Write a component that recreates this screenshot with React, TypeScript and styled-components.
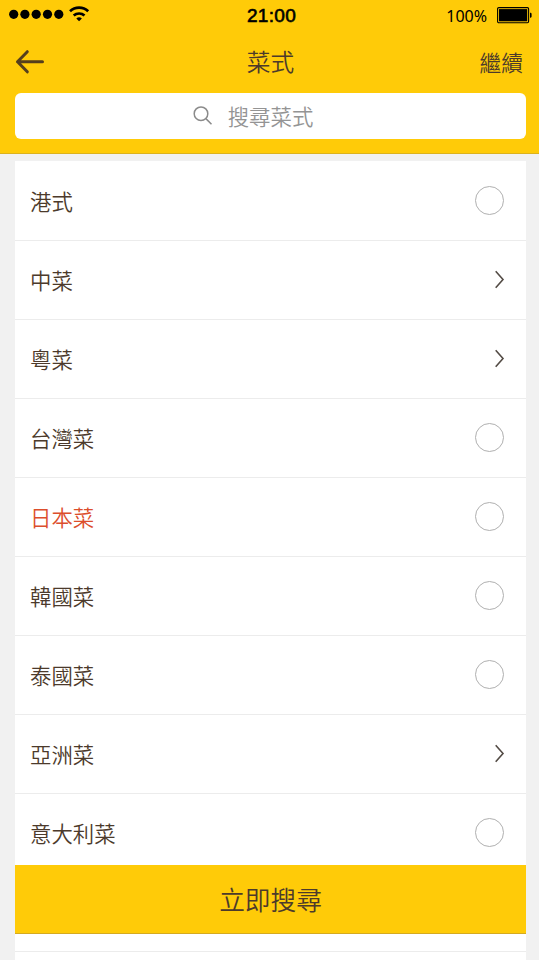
import React from "react";
import styled, { createGlobalStyle } from "styled-components";

const cjk = '"Noto Sans CJK TC", "Noto Sans", sans-serif';

const GlobalStyle = createGlobalStyle`
  *, *::before, *::after { box-sizing: border-box; }
  body { margin: 0; background: #f1f1f1; }
  button { border: 0; padding: 0; background: none; font: inherit; color: inherit; }
`;

const Screen = styled.main`
  position: relative;
  width: 539px;
  height: 960px;
  overflow: hidden;
  background: #f1f1f1;
  color: #4c3a2b;
  font-family: ${cjk};
  font-weight: 350;
`;

const Header = styled.header`
  height: 154px;
  background: #ffcb08;
  border-bottom: 1px solid #dcb21c;
`;

const StatusBar = styled.div`
  display: grid;
  grid-template-columns: 1fr auto 1fr;
  align-items: center;
  height: 31px;
  padding: 0 7px 0 9px;
  color: #000;
`;

const Signal = styled.div`
  display: flex;
  align-items: center;
  height: 31px;
  padding-bottom: 3px;
  svg { display: block; }
`;

const Clock = styled.span`
  font: 400 19px/28px "Liberation Sans", Arial, sans-serif;
  -webkit-text-stroke: 0.6px #000;
  letter-spacing: 0.3px;
  padding: 0 0 0 2px;
`;

const Power = styled.div`
  display: flex;
  align-items: center;
  justify-content: flex-end;
  height: 31px;
  gap: 10px;
  svg { display: block; }
`;

const Percent = styled.span`
  font: 400 16px/28px "Noto Sans", sans-serif;
  padding-top: 1px;
`;

const NavBar = styled.nav`
  display: grid;
  grid-template-columns: 1fr auto 1fr;
  align-items: center;
  height: 62px;
  padding: 0 16px 0 15px;
`;

const BackButton = styled.button`
  display: flex;
  justify-self: start;
`;

const Title = styled.h1`
  margin: 0;
  padding: 0 0 2px 3px;
  font-size: 23.7px;
  font-weight: 350;
  line-height: 36px;
`;

const NextButton = styled.button`
  justify-self: end;
  font-size: 21.7px;
  line-height: 32px;
`;

const SearchBox = styled.div`
  display: flex;
  align-items: center;
  justify-content: center;
  gap: 15px;
  height: 46px;
  margin: 0 13px 0 15px;
  padding-right: 35px;
  border-radius: 6px;
  background: #fff;
  color: #949494;
  font-size: 21.4px;

  span { padding-bottom: 1px; }
`;

const List = styled.ul`
  width: 511px;
  height: 799px;
  margin: 7px 0 0 15px;
  padding: 0;
  list-style: none;
  background: #fff;
`;

const Row = styled.li<{ $selected?: boolean }>`
  display: flex;
  align-items: center;
  justify-content: space-between;
  height: 79px;
  padding: 0 21px 1px 15px;
  border-top: 1px solid #ececec;
  font-size: 21.4px;
  color: ${(p) => (p.$selected ? "#dc4e2c" : "#4c3a2b")};
  &:first-child { border-top-color: transparent; }
`;

const Radio = styled.span`
  width: 29px;
  height: 29px;
  margin-right: 1px;
  border: 1px solid #b0b0b0;
  border-radius: 50%;
`;

const SearchNow = styled.button`
  position: absolute;
  left: 15px;
  top: 865px;
  width: 511px;
  height: 69px;
  background: #ffcb08;
  border-bottom: 1px solid #d5aa20;
  font-size: 25.7px;
  line-height: 68px;
`;

const cuisines: { name: string; more?: boolean; selected?: boolean }[] = [
  { name: "港式" },
  { name: "中菜", more: true },
  { name: "粵菜", more: true },
  { name: "台灣菜" },
  { name: "日本菜", selected: true },
  { name: "韓國菜" },
  { name: "泰國菜" },
  { name: "亞洲菜", more: true },
  { name: "意大利菜" },
];

const SignalIcon = () => (
  <svg width="81" height="22" viewBox="0 0 81 22">
    {[4.7, 15.9, 27.2, 38.5, 49.8].map((x) => (
      <circle key={x} cx={x} cy="11.3" r="4.6" />
    ))}
    <g fill="none" stroke="#000" strokeWidth="2.7">
      <path d="M61 8.3a13.3 13.3 0 0 1 18.2 0" />
      <path d="M64.7 12.6a8 8 0 0 1 10.8 0" />
    </g>
    <path d="M67.3 15.4q2.8-2.2 5.6 0L70.1 18.2z" />
  </svg>
);

const BatteryIcon = () => (
  <svg width="35" height="18" viewBox="0 0 35 18">
    <rect x=".6" y=".6" width="31" height="15.2" rx="1.2" fill="none" stroke="#000" strokeWidth="1.1" />
    <rect x="2" y="2.1" width="28.2" height="12.2" />
    <path d="M33 5.8h.5q1.1 0 1.1 1.1v2.7q0 1.1-1.1 1.1H33z" />
  </svg>
);

const BackIcon = () => (
  <svg width="30" height="26" viewBox="0 0 30 26" fill="none" stroke="#553f1d" strokeWidth="3" strokeLinecap="round" strokeLinejoin="round">
    <path d="M12.3 2.7 2.5 12.7l9.8 10.1M2.5 12.7h25" />
  </svg>
);

const SearchIcon = () => (
  <svg width="20" height="20" viewBox="0 0 20 20" fill="none" stroke="#8b8b8b" strokeWidth="1.5">
    <circle cx="8" cy="7.7" r="6.8" />
    <path d="m12.9 12.6 5.6 5.6" />
  </svg>
);

const Chevron = () => (
  <svg width="11" height="20" viewBox="0 0 11 20" fill="none" stroke="#534b45" strokeWidth="1.6">
    <path d="m1.7 1.2 7.3 8.3-7.3 8.3" />
  </svg>
);

export default function App() {
  return (
    <Screen>
      <GlobalStyle />
      <Header>
        <StatusBar>
          <Signal><SignalIcon /></Signal>
          <Clock>21:00</Clock>
          <Power>
            <Percent>100%</Percent>
            <BatteryIcon />
          </Power>
        </StatusBar>
        <NavBar>
          <BackButton aria-label="返回"><BackIcon /></BackButton>
          <Title>菜式</Title>
          <NextButton>繼續</NextButton>
        </NavBar>
        <SearchBox>
          <SearchIcon />
          <span>搜尋菜式</span>
        </SearchBox>
      </Header>
      <List>
        {cuisines.map((c) => (
          <Row key={c.name} $selected={c.selected}>
            <span>{c.name}</span>
            {c.more ? <Chevron /> : <Radio />}
          </Row>
        ))}
        <Row />
        <Row />
      </List>
      <SearchNow>立即搜尋</SearchNow>
    </Screen>
  );
}
